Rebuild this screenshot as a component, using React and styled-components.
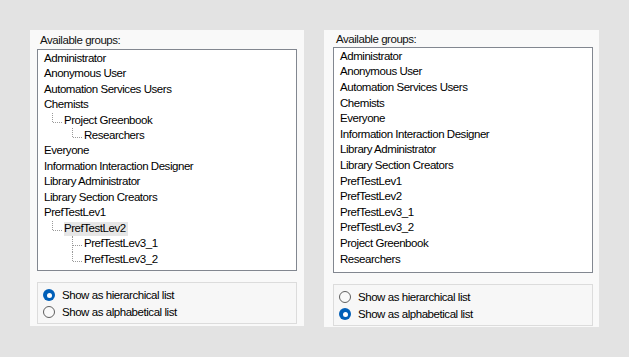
import React from "react";
import styled, { createGlobalStyle } from "styled-components";

const Global = createGlobalStyle`
  html, body { margin: 0; padding: 0; background: #e3e3e3; }
  body { font-family: "Liberation Sans", Arial, sans-serif; }
`;

const Page = styled.div`
  display: flex;
  align-items: flex-start;
  gap: 20px;
  padding: 30px 0 0 30px;
  width: 629px;
  height: 357px;
  box-sizing: border-box;
`;

const Panel = styled.div`
  display: flex;
  flex-direction: column;
  width: ${(p) => p.$w}px;
  height: ${(p) => p.$h}px;
  padding: 0 ${(p) => p.$pr}px 0 ${(p) => p.$pl}px;
  box-sizing: border-box;
  background: #f9f9f9;
  font-size: 11.5px;
  letter-spacing: -0.45px;
  color: #000;
`;

const Label = styled.div`
  height: ${(p) => p.$h}px;
  display: flex;
  align-items: center;
  padding-left: 3px;
  color: #111;
`;

const ListBox = styled.div`
  height: ${(p) => p.$h}px;
  box-sizing: border-box;
  border: 1px solid #828790;
  background: #fff;
  padding: 1px 0 0 6px;
  overflow: hidden;
`;

const Row = styled.div`
  display: flex;
  align-items: center;
  height: ${(p) => p.$rowH}px;
  white-space: nowrap;
  padding-left: ${(p) => (p.$level > 0 ? (p.$level - 1) * 20 + 8 : 0)}px;
`;

const Connector = styled.span`
  position: relative;
  align-self: stretch;
  width: 12px;
  flex: none;

  &::before {
    content: "";
    position: absolute;
    left: 0;
    top: 0;
    height: ${(p) => (p.$last ? "58%" : "100%")};
    border-left: 1px dotted #9a9a9a;
  }
  &::after {
    content: "";
    position: absolute;
    left: 1px;
    top: 58%;
    width: 9px;
    border-top: 1px dotted #9a9a9a;
  }
`;

const ItemText = styled.span`
  padding: 0 2px 1px 0;
  background: ${(p) => (p.$selected ? "#e6e6e6" : "transparent")};
  line-height: 13px;
`;

const RadioBox = styled.div`
  margin-top: 11px;
  height: 42px;
  box-sizing: border-box;
  border: 1px solid #dcdcdc;
  background: #f7f7f7;
  padding: 3.5px 0 0 5px;
`;

const RadioRow = styled.label`
  display: flex;
  align-items: center;
  gap: 7px;
  height: 17px;
  white-space: nowrap;
`;

const RadioCircle = styled.span`
  width: 12px;
  height: 12px;
  box-sizing: border-box;
  border-radius: 50%;
  flex: none;
  display: flex;
  align-items: center;
  justify-content: center;
  background: ${(p) => (p.$checked ? "#005fb8" : "#f9f9f9")};
  border: ${(p) => (p.$checked ? "none" : "1px solid #5f5f5f")};

  &::after {
    content: "";
    display: ${(p) => (p.$checked ? "block" : "none")};
    width: 5px;
    height: 5px;
    border-radius: 50%;
    background: #fff;
  }
`;

const hierarchical = [
  { t: "Administrator", l: 0 },
  { t: "Anonymous User", l: 0 },
  { t: "Automation Services Users", l: 0 },
  { t: "Chemists", l: 0 },
  { t: "Project Greenbook", l: 1, last: true },
  { t: "Researchers", l: 2, last: true },
  { t: "Everyone", l: 0 },
  { t: "Information Interaction Designer", l: 0 },
  { t: "Library Administrator", l: 0 },
  { t: "Library Section Creators", l: 0 },
  { t: "PrefTestLev1", l: 0 },
  { t: "PrefTestLev2", l: 1, last: true, sel: true },
  { t: "PrefTestLev3_1", l: 2, last: false },
  { t: "PrefTestLev3_2", l: 2, last: true },
];

const alphabetical = [
  "Administrator",
  "Anonymous User",
  "Automation Services Users",
  "Chemists",
  "Everyone",
  "Information Interaction Designer",
  "Library Administrator",
  "Library Section Creators",
  "PrefTestLev1",
  "PrefTestLev2",
  "PrefTestLev3_1",
  "PrefTestLev3_2",
  "Project Greenbook",
  "Researchers",
].map((t) => ({ t, l: 0 }));

function GroupPanel({ items, mode, dims }) {
  return (
    <Panel $w={dims.w} $h={dims.h} $pl={dims.pl} $pr={dims.pr}>
      <Label $h={dims.labelH}>Available groups:</Label>
      <ListBox $h={dims.listH}>
        {items.map((it, i) => (
          <Row key={i} $rowH={dims.rowH} $level={it.l}>
            {it.l > 0 && <Connector $last={it.last} />}
            <ItemText $selected={it.sel}>{it.t}</ItemText>
          </Row>
        ))}
      </ListBox>
      <RadioBox>
        <RadioRow>
          <RadioCircle $checked={mode === "h"} />
          Show as hierarchical list
        </RadioRow>
        <RadioRow>
          <RadioCircle $checked={mode === "a"} />
          Show as alphabetical list
        </RadioRow>
      </RadioBox>
    </Panel>
  );
}

export default function App() {
  return (
    <>
      <Global />
      <Page>
        <GroupPanel
          items={hierarchical}
          mode="h"
          dims={{ w: 274, h: 296, pl: 7, pr: 7, labelH: 19, listH: 222, rowH: 15.46 }}
        />
        <GroupPanel
          items={alphabetical}
          mode="a"
          dims={{ w: 275, h: 297, pl: 9, pr: 6, labelH: 17, listH: 226, rowH: 15.6 }}
        />
      </Page>
    </>
  );
}
